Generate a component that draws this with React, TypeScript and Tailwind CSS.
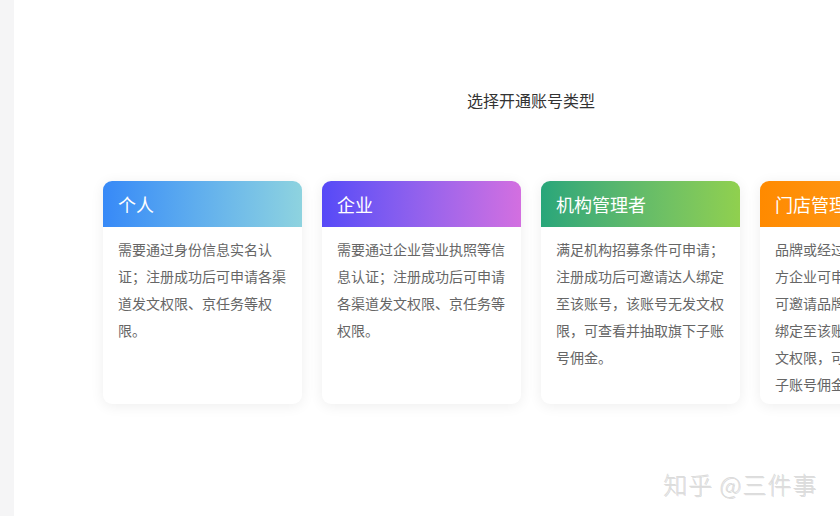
import React from "react";

const cards = [
  {
    title: "个人",
    grad: "bg-gradient-to-r from-[#3789f7] to-[#8ed3df]",
    text: "需要通过身份信息实名认证；注册成功后可申请各渠道发文权限、京任务等权限。",
  },
  {
    title: "企业",
    grad: "bg-gradient-to-r from-[#5649f7] to-[#d36fe0]",
    text: "需要通过企业营业执照等信息认证；注册成功后可申请各渠道发文权限、京任务等权限。",
  },
  {
    title: "机构管理者",
    grad: "bg-gradient-to-r from-[#27a67a] to-[#90d04e]",
    text: "满足机构招募条件可申请；注册成功后可邀请达人绑定至该账号，该账号无发文权限，可查看并抽取旗下子账号佣金。",
  },
  {
    title: "门店管理者",
    grad: "bg-gradient-to-r from-[#ff8a00] to-[#ffa21f]",
    text: "品牌或经过品牌授权的第三方企业可申请；注册成功后可邀请品牌门店及导购达人绑定至该账号，该账号无发文权限，可查看并抽取旗下子账号佣金。",
  },
];

export default function App() {
  return (
    <div
      className="relative flex w-[840px] h-[516px] overflow-hidden bg-white"
      style={{ fontFamily: '"Noto Sans CJK SC", "Noto Sans", sans-serif' }}
    >
      <div className="w-[14px] shrink-0 bg-[#f5f5f6]" />
      <div className="flex-1 overflow-hidden pl-[89px]">
        <div className="w-[856px]">
          <div className="mt-[88px] text-center text-[16px] leading-6 text-[#333]">
            选择开通账号类型
          </div>
          <div className="mt-[69px] flex gap-[20px]">
            {cards.map((c) => (
              <div
                key={c.title}
                className="w-[199px] h-[223px] shrink-0 overflow-hidden rounded-[9px] bg-white shadow-[0_2px_14px_rgba(0,0,0,0.07)]"
              >
                <div
                  className={`${c.grad} flex h-[46px] items-center px-[15px] text-[18px] text-white`}
                >
                  <span className="whitespace-nowrap">{c.title}</span>
                </div>
                <div className="px-[15px] pt-[9px] text-[14px] leading-[27px] text-[#666]">
                  {c.text}
                </div>
              </div>
            ))}
          </div>
        </div>
      </div>
      <div
        className="absolute left-[663px] top-[468px] whitespace-nowrap text-[24px] font-light leading-8 tracking-[1px] text-[#dcdcdc]"
        style={{ textShadow: "1px 1px 0 rgba(0,0,0,0.14)" }}
      >
        知乎 @三件事
      </div>
    </div>
  );
}
